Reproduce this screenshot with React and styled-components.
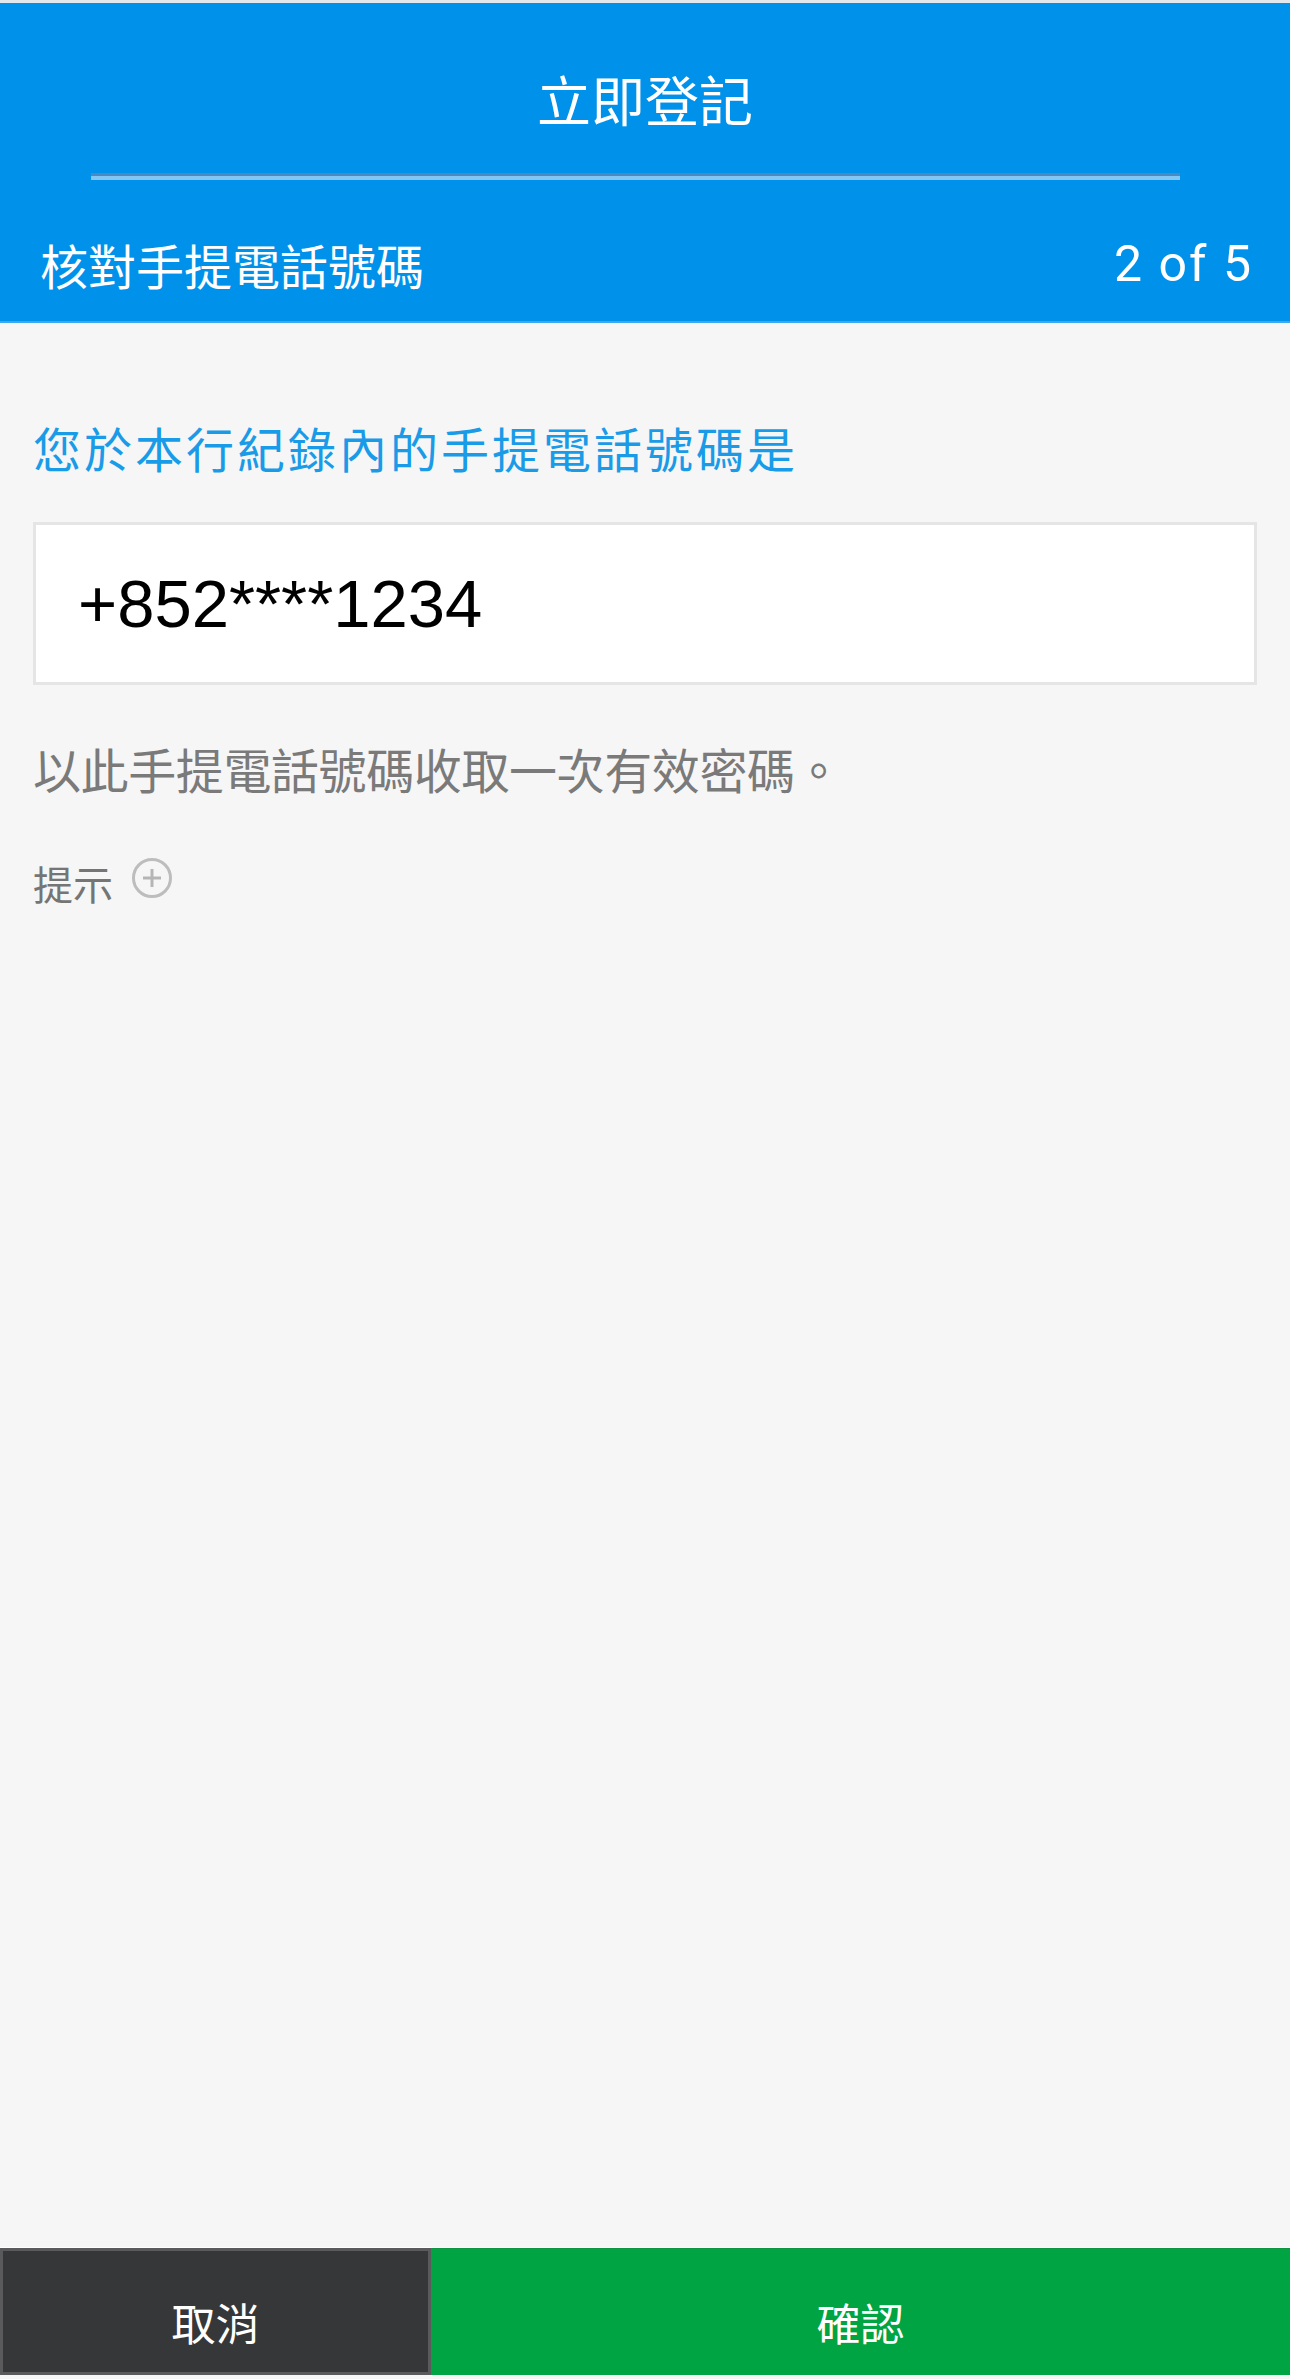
import React from 'react';
import styled, { createGlobalStyle } from 'styled-components';

const GlobalStyle = createGlobalStyle`
  html, body {
    margin: 0;
    padding: 0;
    background: #f6f6f6;
  }

  * {
    box-sizing: border-box;
  }
`;

const cjk = `'Noto Sans CJK TC', 'Noto Sans', sans-serif`;

const Page = styled.div`
  display: flex;
  flex-direction: column;
  min-height: 2379px;
  background: #f6f6f6;
  font-family: ${cjk};
`;

const Header = styled.header`
  background: #0091ea;
  border-top: 3px solid #e4e8ec;
  border-bottom: 2px solid #3ba9f1;
  color: #fff;
`;

const Title = styled.h1`
  margin: 66px 0 0;
  font-size: 54px;
  font-weight: 400;
  line-height: 60px;
  text-align: center;
`;

const Divider = styled.div`
  height: 0;
  margin: 44px 110px 0 91px;
  border-top: 3px solid #4a8ac2;
  border-bottom: 4px solid #82c6f4;
`;

const StepRow = styled.div`
  display: flex;
  justify-content: space-between;
  align-items: center;
  height: 60px;
  margin: 54px 0 27px;
  padding: 0 37px 0 40px;
`;

const StepName = styled.span`
  font-size: 48px;
  line-height: 60px;
`;

const StepCount = styled.span`
  font-family: Roboto, 'Liberation Sans', sans-serif;
  font-size: 50px;
  letter-spacing: 2px;
  line-height: 60px;
`;

const Content = styled.main`
  flex: 1;
  display: flex;
  flex-direction: column;
  padding: 0 33px;
`;

const Label = styled.div`
  margin-top: 94px;
  color: #1a9be8;
  font-size: 48px;
  letter-spacing: 3px;
  line-height: 60px;
`;

const PhoneBox = styled.div`
  display: flex;
  align-items: center;
  height: 163px;
  margin-top: 45px;
  padding-left: 42px;
  background: #fff;
  border: 3px solid #e5e5e5;
  color: #000;
  font-family: 'Liberation Sans', Arial, sans-serif;
  font-size: 67px;
`;

const Note = styled.p`
  margin: 53px 0 0;
  color: #7a7a7a;
  font-size: 48px;
  letter-spacing: -0.4px;
  line-height: 60px;
`;

const HintRow = styled.div`
  display: flex;
  align-items: center;
  gap: 18px;
  margin-top: 59px;
  color: #757575;
  font-size: 40px;
  line-height: 50px;
`;

const HintIcon = styled.svg`
  width: 42px;
  height: 42px;
  margin-bottom: 10px;
`;

const Footer = styled.footer`
  display: grid;
  grid-template-columns: 431px 1fr;
  height: 128px;
  margin-bottom: 4px;
  border-top: 1px solid #ffffff;
`;

const FooterButton = styled.button`
  display: flex;
  align-items: center;
  justify-content: center;
  padding: 20px 0 0;
  border: ${({ primary }) => (primary ? 'none' : '3px solid #5a5a5c')};
  border-top: ${({ primary }) => (primary ? '1px solid #0c9440' : '3px solid #5a5a5c')};
  background: ${({ primary }) => (primary ? '#00a443' : '#363739')};
  color: #fff;
  font-family: ${cjk};
  font-size: 44px;
  cursor: pointer;
`;

const PlusCircle = () => (
  <HintIcon viewBox="0 0 42 42">
    <circle cx="21" cy="21" r="18.5" fill="none" stroke="#bdbdbd" strokeWidth="3" />
    <path d="M12 21h18M21 12v18" stroke="#b5b5b5" strokeWidth="3" />
  </HintIcon>
);

const App = () => (
  <>
    <GlobalStyle />
    <Page>
      <Header>
        <Title>立即登記</Title>
        <Divider />
        <StepRow>
          <StepName>核對手提電話號碼</StepName>
          <StepCount>2 of 5</StepCount>
        </StepRow>
      </Header>
      <Content>
        <Label>您於本行紀錄內的手提電話號碼是</Label>
        <PhoneBox>+852****1234</PhoneBox>
        <Note>以此手提電話號碼收取一次有效密碼。</Note>
        <HintRow>
          提示
          <PlusCircle />
        </HintRow>
      </Content>
      <Footer>
        <FooterButton>取消</FooterButton>
        <FooterButton primary>確認</FooterButton>
      </Footer>
    </Page>
  </>
);

export default App;
